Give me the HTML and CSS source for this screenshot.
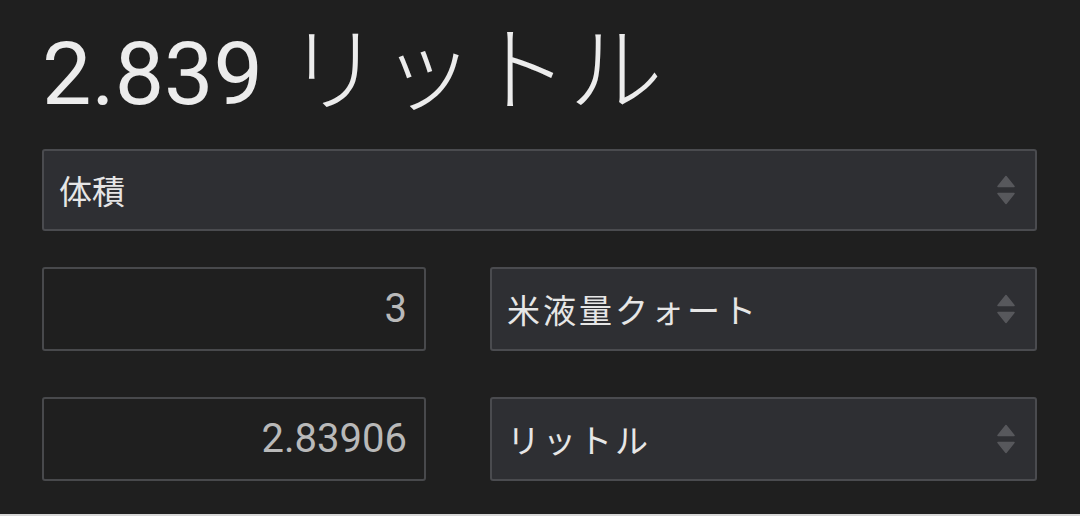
FILE: index.html
```html
<!DOCTYPE html>
<html lang="ja">
<head>
<meta charset="utf-8">
<link rel="stylesheet" href="styles.css">
</head>
<body>
<div class="page">
  <h1 class="result">2.839 <span class="result-unit">リットル</span></h1>
  <div class="select full">
    <span class="select-text">体積</span>
    <svg class="arrows" width="18" height="30" viewBox="0 0 18 30"><path d="M9 1.5 L17 11.5 H1 Z" fill="currentColor" stroke="currentColor" stroke-width="1.5" stroke-linejoin="round"/><path d="M1 18.5 H17 L9 28.5 Z" fill="currentColor" stroke="currentColor" stroke-width="1.5" stroke-linejoin="round"/></svg>
  </div>
  <div class="row row-a">
    <div class="input"><span class="num">3</span></div>
    <div class="select">
      <span class="select-text kana">米液量クォート</span>
      <svg class="arrows" width="18" height="30" viewBox="0 0 18 30"><path d="M9 1.5 L17 11.5 H1 Z" fill="currentColor" stroke="currentColor" stroke-width="1.5" stroke-linejoin="round"/><path d="M1 18.5 H17 L9 28.5 Z" fill="currentColor" stroke="currentColor" stroke-width="1.5" stroke-linejoin="round"/></svg>
    </div>
  </div>
  <div class="row row-b">
    <div class="input"><span class="num">2.83906</span></div>
    <div class="select">
      <span class="select-text kana">リットル</span>
      <svg class="arrows" width="18" height="30" viewBox="0 0 18 30"><path d="M9 1.5 L17 11.5 H1 Z" fill="currentColor" stroke="currentColor" stroke-width="1.5" stroke-linejoin="round"/><path d="M1 18.5 H17 L9 28.5 Z" fill="currentColor" stroke="currentColor" stroke-width="1.5" stroke-linejoin="round"/></svg>
    </div>
  </div>
</div>
<div class="bottom-line"></div>
</body>
</html>
```

FILE: styles.css
```css
html, body {
  margin: 0;
  padding: 0;
  background: #1f1f1f;
}
body {
  width: 1080px;
  height: 516px;
  overflow: hidden;
  position: relative;
  font-family: Roboto, "Noto Sans CJK JP", sans-serif;
}
.page {
  padding: 20px 43px 0 42px;
  height: 483px;
  box-sizing: border-box;
  display: flex;
  flex-direction: column;
}
.result {
  margin: 0 0 25px 0;
  font-size: 88px;
  font-weight: 400;
  line-height: 104px;
  height: 104px;
  color: #ececec;
  white-space: nowrap;
}
.result-unit {
  font-family: Roboto, "Noto Sans CJK JP", sans-serif;
  font-size: 94px;
  font-weight: 300;
  line-height: 104px;
  letter-spacing: 0;
  margin-left: 2px;
}
.select {
  box-sizing: border-box;
  height: 84px;
  background: #2e2f33;
  border: 2px solid #4a4b4f;
  border-radius: 3px;
  display: flex;
  align-items: center;
  justify-content: space-between;
  padding: 0 20px 0 15px;
}
.select.full {
  height: 82px;
}
.select-text {
  font-family: "Noto Sans CJK JP", sans-serif;
  font-size: 33px;
  color: #e6e6e6;
  line-height: 1;
}
.select-text.kana {
  letter-spacing: 3px;
}
.arrows {
  color: #57585c;
  display: block;
}
.row {
  display: grid;
  grid-template-columns: 384px 547px;
  column-gap: 64px;
}
.row-a {
  margin-top: 36px;
}
.row-b {
  margin-top: 46px;
}
.input {
  box-sizing: border-box;
  height: 84px;
  border: 2px solid #48494c;
  border-radius: 3px;
  background: #1f1f1f;
  display: flex;
  align-items: center;
  justify-content: flex-end;
  padding-right: 17px;
}
.num {
  font-family: Roboto, sans-serif;
  font-size: 40px;
  color: #b9b9b9;
  line-height: 1;
}
.bottom-line {
  position: absolute;
  left: 0;
  right: 0;
  bottom: 0;
  height: 2px;
  background: #d8d8d8;
}
```
